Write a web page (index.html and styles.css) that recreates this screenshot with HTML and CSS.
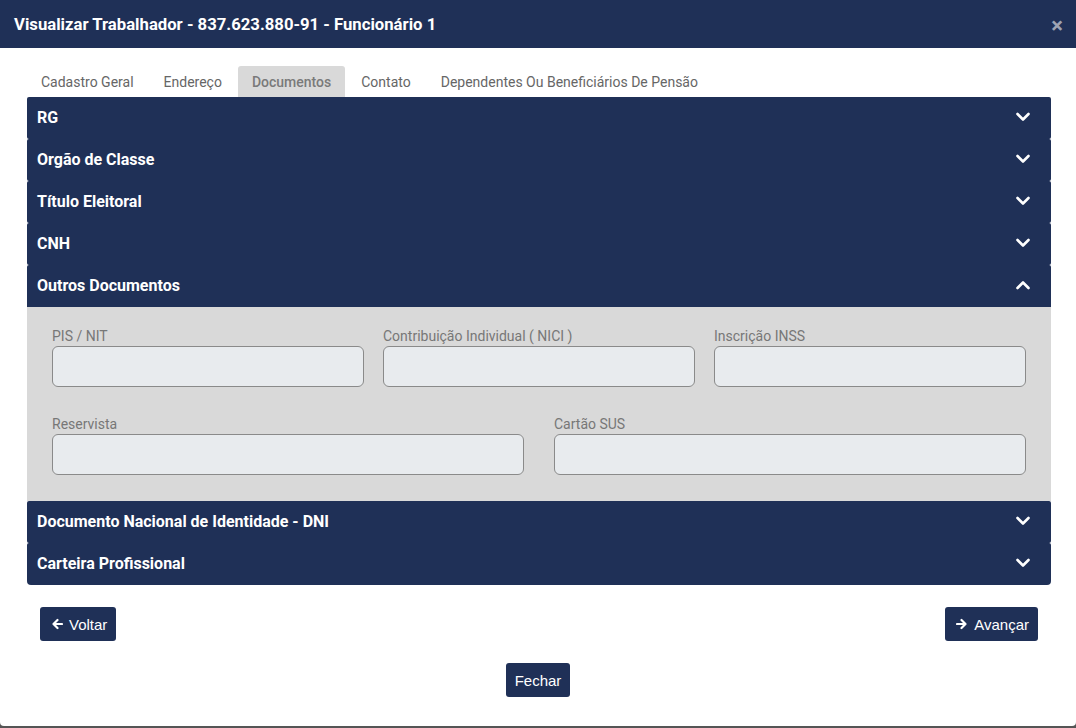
FILE: index.html
```html
<!DOCTYPE html>
<html lang="pt-BR">
<head>
<meta charset="utf-8">
<title>Visualizar Trabalhador</title>
<link rel="stylesheet" href="styles.css">
</head>
<body>
<div class="modal">
  <div class="modal-header">
    <h1 class="modal-title">Visualizar Trabalhador - 837.623.880-91 - Funcionário 1</h1>
    <span class="close">&#215;</span>
  </div>
  <div class="modal-body">
    <ul class="tabs">
      <li class="tab">Cadastro Geral</li>
      <li class="tab">Endereço</li>
      <li class="tab active">Documentos</li>
      <li class="tab">Contato</li>
      <li class="tab">Dependentes Ou Beneficiários De Pensão</li>
    </ul>
    <div class="accordion">
      <div class="acc-item"><div class="acc-head"><span>RG</span><svg class="chev" viewBox="0 0 14 10" width="14" height="10"><polyline points="1.5,2 7,7.5 12.5,2"/></svg></div></div>
      <div class="acc-item"><div class="acc-head"><span>Orgão de Classe</span><svg class="chev" viewBox="0 0 14 10" width="14" height="10"><polyline points="1.5,2 7,7.5 12.5,2"/></svg></div></div>
      <div class="acc-item"><div class="acc-head"><span>Título Eleitoral</span><svg class="chev" viewBox="0 0 14 10" width="14" height="10"><polyline points="1.5,2 7,7.5 12.5,2"/></svg></div></div>
      <div class="acc-item"><div class="acc-head"><span>CNH</span><svg class="chev" viewBox="0 0 14 10" width="14" height="10"><polyline points="1.5,2 7,7.5 12.5,2"/></svg></div></div>
      <div class="acc-item open">
        <div class="acc-head"><span>Outros Documentos</span><svg class="chev" viewBox="0 0 14 10" width="14" height="10"><polyline points="1.5,8 7,2.5 12.5,8"/></svg></div>
        <div class="acc-body">
          <div class="row row3">
            <div class="field"><label>PIS / NIT</label><div class="input"></div></div>
            <div class="field"><label>Contribuição Individual ( NICI )</label><div class="input"></div></div>
            <div class="field"><label>Inscrição INSS</label><div class="input"></div></div>
          </div>
          <div class="row row2">
            <div class="field"><label>Reservista</label><div class="input"></div></div>
            <div class="field"><label>Cartão SUS</label><div class="input"></div></div>
          </div>
        </div>
      </div>
      <div class="acc-item"><div class="acc-head"><span>Documento Nacional de Identidade - DNI</span><svg class="chev" viewBox="0 0 14 10" width="14" height="10"><polyline points="1.5,2 7,7.5 12.5,2"/></svg></div></div>
      <div class="acc-item last"><div class="acc-head"><span>Carteira Profissional</span><svg class="chev" viewBox="0 0 14 10" width="14" height="10"><polyline points="1.5,2 7,7.5 12.5,2"/></svg></div></div>
    </div>
    <div class="nav-buttons">
      <button class="btn btn-icon"><svg viewBox="0 0 12 12" width="12" height="12" class="arrow"><path d="M11 6H2.5M6.5 2L2.5 6l4 4"/></svg>Voltar</button>
      <button class="btn btn-icon"><svg viewBox="0 0 12 12" width="12" height="12" class="arrow"><path d="M1 6h8.5M5.5 2l4 4-4 4"/></svg>Avançar</button>
    </div>
    <div class="footer">
      <button class="btn">Fechar</button>
    </div>
  </div>
</div>
</body>
</html>
```
FILE: styles.css
```css
html, body {
  margin: 0;
  padding: 0;
  background: #555555;
}
body {
  height: 728px;
  overflow: hidden;
}
.modal {
  width: 1076px;
  height: 726px;
  background: #ffffff;
  border-radius: 0 0 4px 4px;
  font-family: Roboto, "Liberation Sans", sans-serif;
  box-sizing: border-box;
}
.modal-header {
  height: 48px;
  background: #1f3057;
  display: flex;
  align-items: center;
  justify-content: space-between;
  padding: 0 12px 0 14px;
}
.modal-title {
  margin: 0;
  color: #ffffff;
  font-size: 16.7px;
  font-weight: 700;
}
.close {
  color: #9ea4b3;
  font-size: 22px;
  font-weight: 700;
  line-height: 1;
  margin-top: 4px;
  margin-right: 1px;
}
.modal-body {
  padding: 18px 25px 0 27px;
}
.tabs {
  list-style: none;
  margin: 0;
  padding: 0;
  display: flex;
  gap: 2px;
  height: 31px;
}
.tab {
  padding: 0 14px;
  height: 31px;
  line-height: 33px;
  font-size: 14px;
  color: #666666;
  border-radius: 3px 3px 0 0;
}
.tab.active {
  background: #d9d9d9;
  color: #7a7a7a;
  font-weight: 500;
}
.accordion {
  display: flex;
  flex-direction: column;
}
.acc-item {
  background: #1f3057;
  border-radius: 2px;
}
.acc-item.last {
  border-radius: 2px 2px 4px 4px;
}
.acc-head {
  height: 42px;
  box-sizing: border-box;
  display: flex;
  align-items: center;
  justify-content: space-between;
  padding: 0 21px 2px 10px;
  color: #ffffff;
  font-size: 16px;
  font-weight: 700;
}
.chev {
  fill: none;
  stroke: #ffffff;
  stroke-width: 2.6;
  stroke-linecap: round;
  stroke-linejoin: round;
}
.acc-body {
  background: #d9d9d9;
  padding: 19px 25px 26px;
}
.row {
  display: grid;
}
.row3 {
  grid-template-columns: repeat(3, 1fr);
  column-gap: 19px;
}
.row2 {
  grid-template-columns: repeat(2, 1fr);
  column-gap: 30px;
  margin-top: 27px;
}
.field label {
  display: block;
  font-size: 14px;
  line-height: 20px;
  color: #777777;
}
.input {
  height: 41px;
  box-sizing: border-box;
  background: #e8ebee;
  border: 1px solid #8a8a8a;
  border-radius: 6px;
}
.nav-buttons {
  display: flex;
  justify-content: space-between;
  padding: 22px 13px 0;
}
.footer {
  display: flex;
  justify-content: center;
  padding-top: 22px;
  margin-left: -27px;
  margin-right: -25px;
}
.btn {
  height: 34px;
  background: #1f3057;
  color: #ffffff;
  border: none;
  border-radius: 3px;
  font-family: "Liberation Sans", Arial, sans-serif;
  font-size: 15px;
  padding: 0 9px;
  display: flex;
  align-items: center;
  gap: 6px;
}
.btn-icon {
  padding-left: 11px;
}
.arrow {
  fill: none;
  stroke: #ffffff;
  stroke-width: 2.2;
  stroke-linecap: round;
  stroke-linejoin: round;
}
```
